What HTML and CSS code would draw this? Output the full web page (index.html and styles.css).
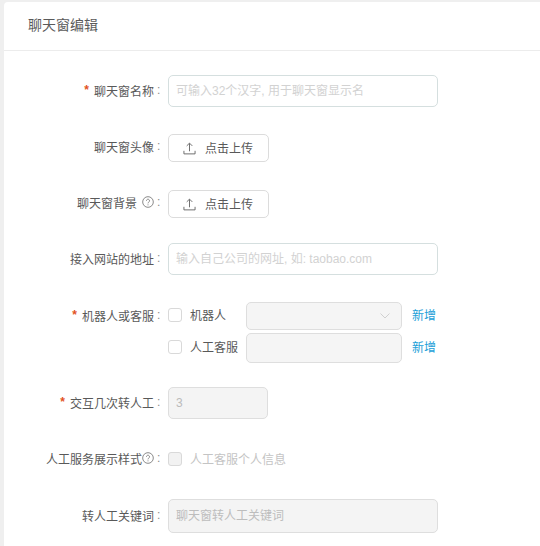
FILE: index.html
```html
<!DOCTYPE html>
<html lang="zh-CN">
<head>
  <meta charset="UTF-8" />
  <link rel="stylesheet" href="styles.css">
  <title>聊天窗编辑</title>
</head>
<body>
  <div class="card">
    <div class="card-title">聊天窗编辑</div>
    <form class="form">
      <div class="row row-name">
        <label class="label"><span class="req">*</span>聊天窗名称<span class="colon">:</span></label>
        <input class="input" type="text" placeholder="可输入32个汉字, 用于聊天窗显示名">
      </div>

      <div class="row row-avatar">
        <label class="label">聊天窗头像<span class="colon">:</span></label>
        <button class="upload" type="button">
          <svg class="upload-icon" viewBox="0 0 14 14"><path d="M7 10V1.500M4 4.200 7 1.200l3 3M1 9.500v3.300h12V9.500" /></svg>
          <span class="btn-text">点击上传</span>
        </button>
      </div>

      <div class="row row-bg">
        <label class="label">聊天窗背景
          <svg class="help help-gap" viewBox="0 0 14 14"><circle cx="7" cy="7" r="6.200" /><path d="M5.200 5.500a1.800 1.800 0 1 1 2.700 1.600c-.6.4-.9.7-.9 1.500M7 9.800v1.100" /></svg>
          <span class="colon">:</span></label>
        <button class="upload" type="button">
          <svg class="upload-icon" viewBox="0 0 14 14"><path d="M7 10V1.500M4 4.200 7 1.200l3 3M1 9.500v3.300h12V9.500" /></svg>
          <span class="btn-text">点击上传</span>
        </button>
      </div>

      <div class="row row-site">
        <label class="label">接入网站的地址<span class="colon">:</span></label>
        <input class="input" type="text" placeholder="输入自己公司的网址, 如: taobao.com">
      </div>

      <div class="row row-agent">
        <label class="label label-agent"><span class="req">*</span>机器人或客服<span class="colon">:</span></label>
        <div class="agents">
          <div class="agent agent-bot">
            <span class="check"></span>
            <span class="agent-name">机器人</span>
            <div class="select">
              <svg class="caret" viewBox="0 0 10 6"><path d="M.5.5 5 5l4.500-4.500" /></svg>
            </div>
            <a class="link">新增</a>
          </div>
          <div class="agent agent-human">
            <span class="check"></span>
            <span class="agent-name">人工客服</span>
            <div class="select select-tall"></div>
            <a class="link">新增</a>
          </div>
        </div>
      </div>

      <div class="row row-times">
        <label class="label"><span class="req">*</span>交互几次转人工<span class="colon">:</span></label>
        <input class="input input-off input-short" type="text" value="3" disabled>
      </div>

      <div class="row row-style">
        <label class="label">人工服务展示样式
          <svg class="help" viewBox="0 0 14 14"><circle cx="7" cy="7" r="6.200" /><path d="M5.200 5.500a1.800 1.800 0 1 1 2.700 1.600c-.6.4-.9.7-.9 1.500M7 9.800v1.100" /></svg>
          <span class="colon">:</span></label>
        <span class="check check-off"></span>
        <span class="check-text">人工客服个人信息</span>
      </div>

      <div class="row row-words">
        <label class="label">转人工关键词<span class="colon">:</span></label>
        <input class="input input-off input-tall" type="text" placeholder="聊天窗转人工关键词" disabled>
      </div>
    </form>
  </div>
</body>
</html>
```

FILE: styles.css
```css
* {
  box-sizing: border-box;
}

html, body {
  margin: 0;
  padding: 0;
  height: 100%;
  overflow: hidden;
  background: #efefef;
  font-family: "Liberation Sans", "Noto Sans CJK SC", sans-serif;
  font-size: 12px;
  color: #595959;
}

.card {
  margin: 2px 0 0 4px;
  height: 100%;
  background: #fff;
  border-radius: 4px 0 0 0;
}

.card-title {
  height: 49px;
  padding: 0 24px 2px;
  line-height: 46px;
  font-size: 14px;
  color: #5a5a5a;
  border-bottom: 1px solid #ececec;
}

.form {
  padding-top: 24px;
}

.row {
  display: flex;
  align-items: center;
}

.row-avatar { margin-top: 27px; }
.row-bg { margin-top: 28px; }
.row-site { margin-top: 25px; }
.row-agent { margin-top: 27px; align-items: flex-start; }
.row-times { margin-top: 24px; }
.row-style { margin-top: 33px; height: 14px; }
.row-words { margin-top: 33px; }

.row-avatar .label,
.row-bg .label {
  padding-bottom: 4px;
}

.label {
  display: flex;
  align-items: center;
  justify-content: flex-end;
  flex: none;
  width: 164px;
  padding: 0 8px 2px 0;
  white-space: nowrap;
}

.label-agent {
  height: 28px;
}

.colon {
  margin-left: 3px;
  width: 3px;
  color: #8c8c8c;
}

.req {
  margin-right: 5px;
  color: #e2521d;
  font-weight: 700;
}

.input {
  width: 270px;
  height: 32px;
  padding: 0 7px;
  border: 1px solid #d5dfdf;
  border-radius: 5px;
  background: #fff;
  font: inherit;
  color: #bbb;
  outline: none;
}

.input::placeholder {
  color: #d2d2d2;
}

.input-off {
  background: #f4f4f4;
  border-color: #dedede;
}

.input-off::placeholder {
  color: #bdbdbd;
}

.input-short {
  width: 100px;
}

.input-tall {
  height: 34px;
}

.upload {
  display: flex;
  align-items: center;
  width: 101px;
  height: 28px;
  padding: 0 0 0 14px;
  border: 1px solid #dcdcdc;
  border-radius: 5px;
  background: #fff;
  font: inherit;
  color: #595959;
}

.upload-icon {
  width: 13px;
  height: 13px;
  margin-right: 9px;
  fill: none;
  stroke: #666;
  stroke-width: 1;
}

.btn-text {
  padding-bottom: 2px;
}

.help {
  flex: none;
  width: 12px;
  height: 12px;
  fill: none;
  stroke: #777;
  stroke-width: 1;
}

.help-gap {
  margin-left: 5px;
}

.agents {
  display: flex;
  flex-direction: column;
  gap: 3px;
}

.agent {
  display: flex;
  align-items: center;
}

.check {
  flex: none;
  width: 14px;
  height: 14px;
  margin-bottom: 2px;
  border: 1px solid #d9d9d9;
  border-radius: 3px;
  background: #fff;
}

.check-off {
  margin-bottom: 0;
  background: #f2f2f2;
}

.check-text {
  margin-left: 8px;
  padding-bottom: 2px;
  color: #c4c4c4;
}

.agent-name {
  flex: none;
  width: 64px;
  padding: 0 0 3px 8px;
}

.select {
  display: flex;
  align-items: center;
  justify-content: flex-end;
  width: 156px;
  height: 28px;
  padding-right: 11px;
  border: 1px solid #dedede;
  border-radius: 5px;
  background: #f5f5f5;
}

.select-tall {
  height: 30px;
}

.caret {
  width: 10px;
  height: 6px;
  fill: none;
  stroke: #d0d0d0;
  stroke-width: 1;
}

.link {
  margin-left: 10px;
  padding-bottom: 3px;
  color: #1ba0d8;
}
```
